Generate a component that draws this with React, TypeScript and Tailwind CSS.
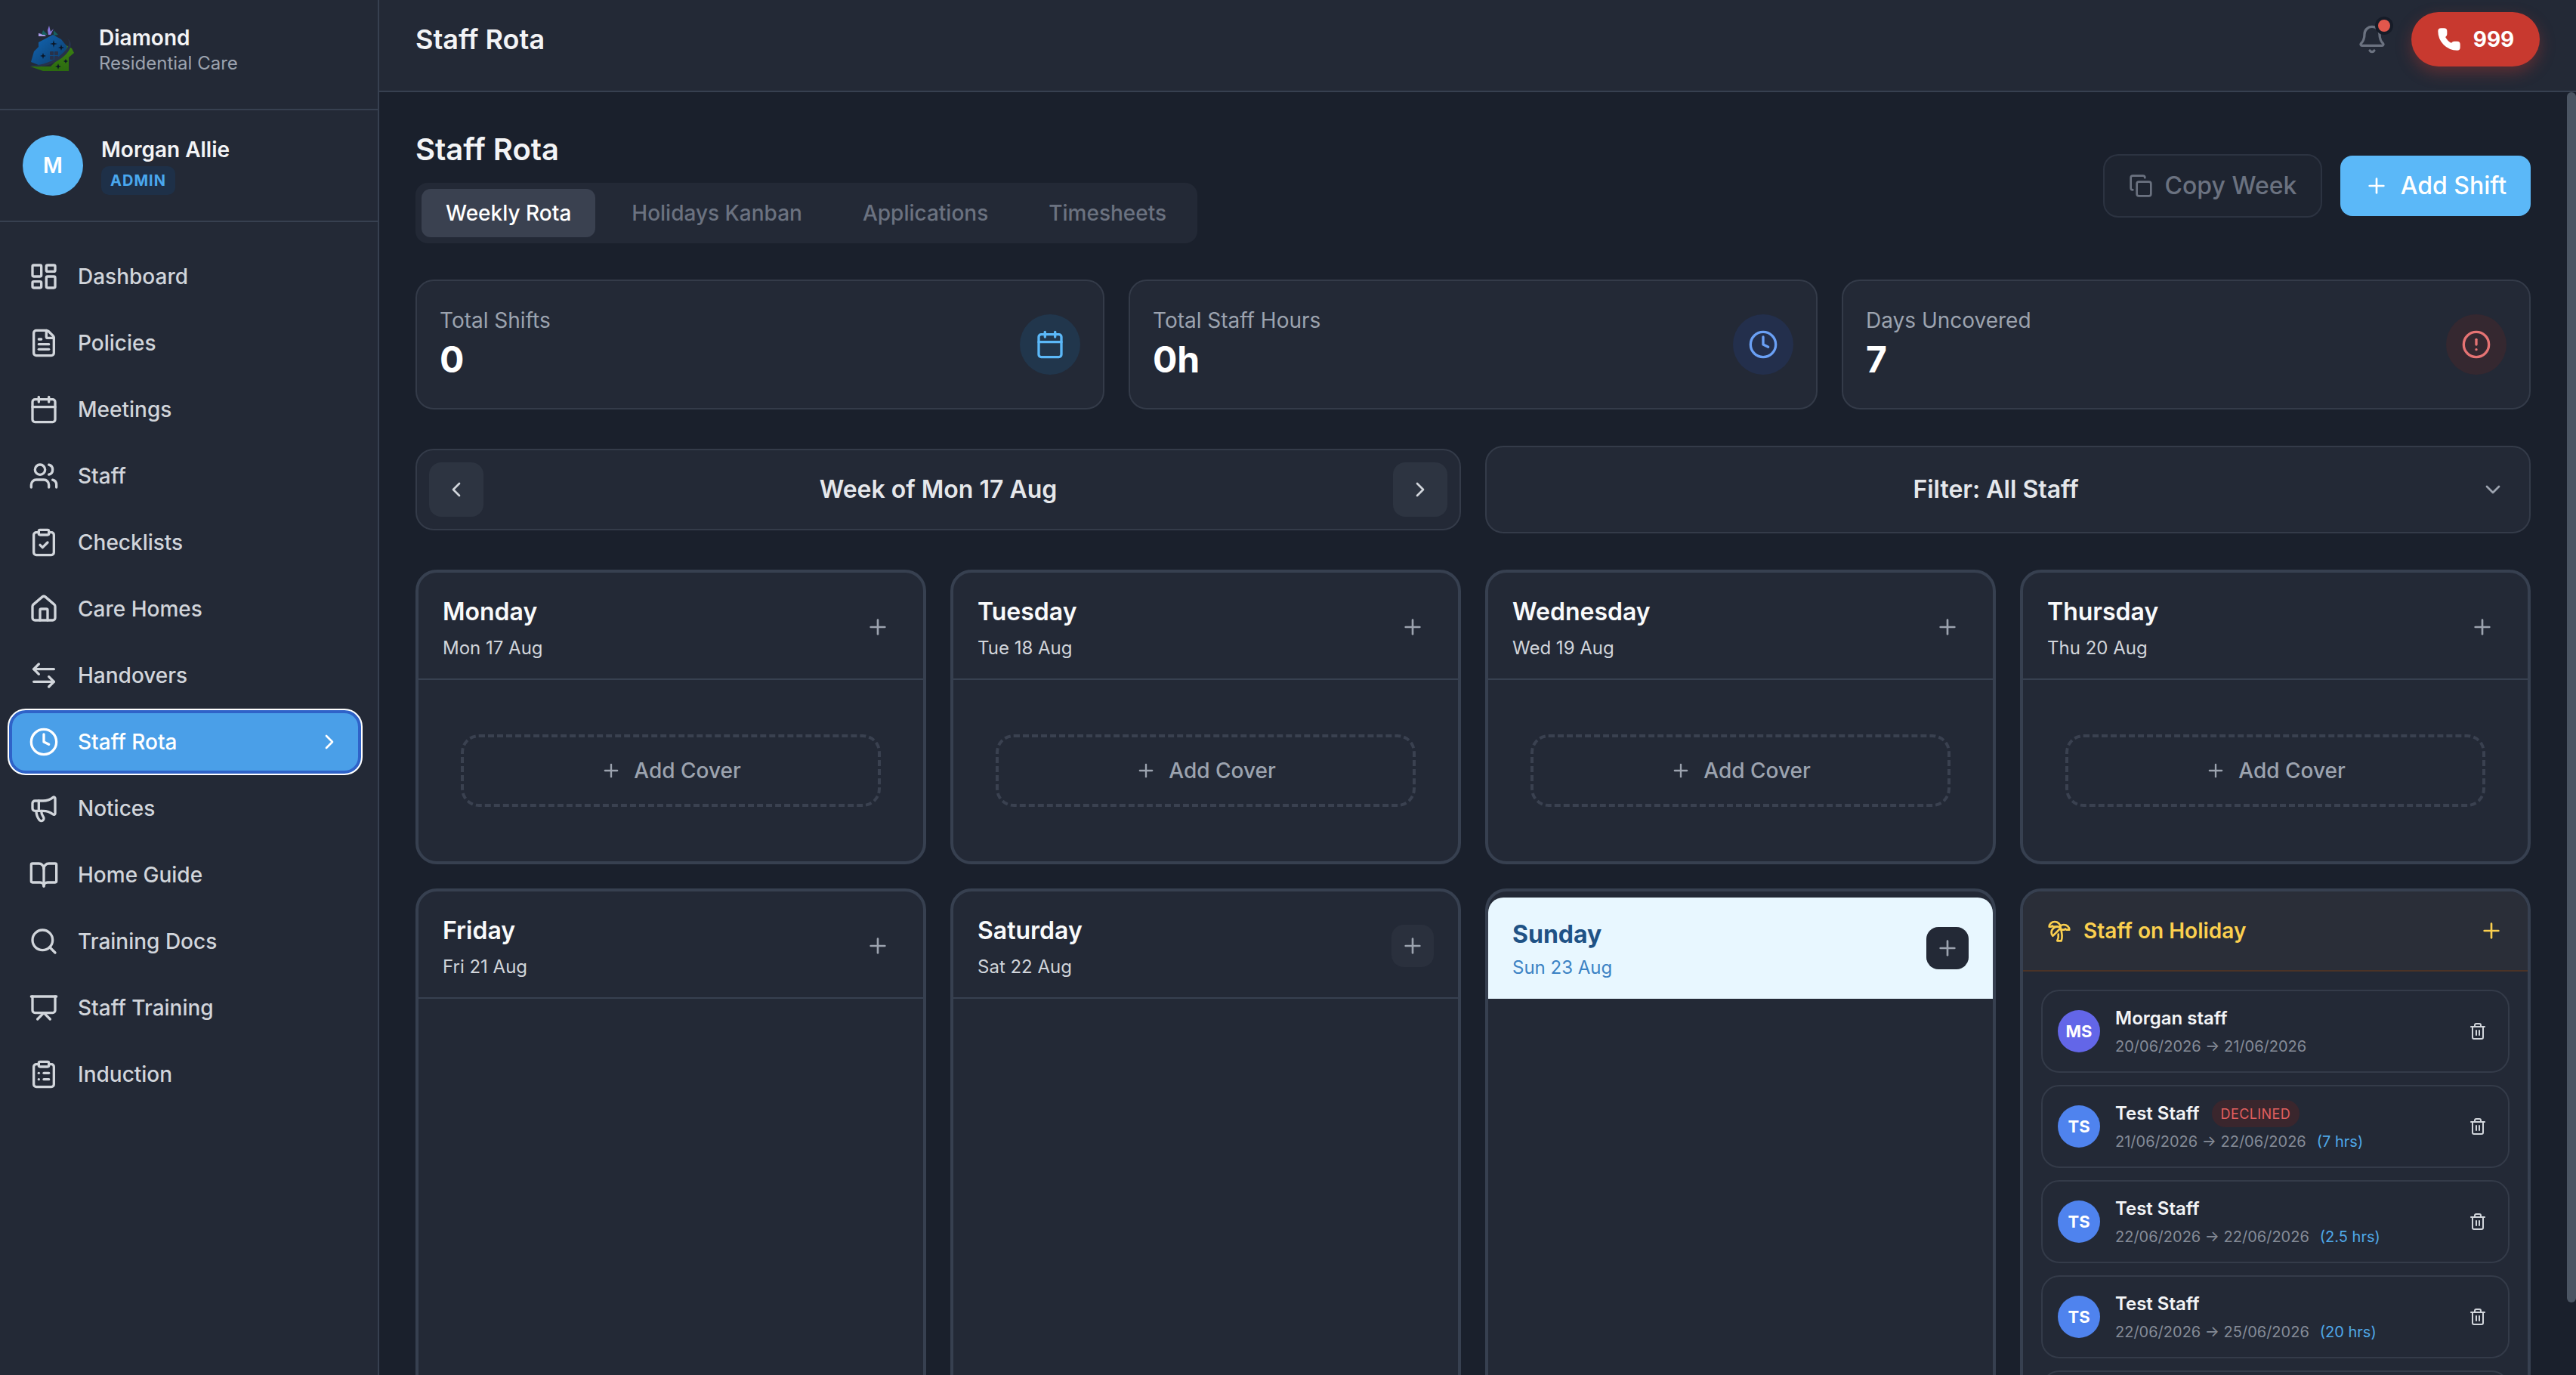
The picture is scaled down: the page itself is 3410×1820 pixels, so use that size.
import {
  AlertCircle,
  ArrowLeftRight,
  BookOpen,
  Calendar,
  ChevronDown,
  ChevronLeft,
  ChevronRight,
  ClipboardCheck,
  ClipboardList,
  Clock,
  Copy,
  FileText,
  Bell,
  House,
  LayoutDashboard,
  Megaphone,
  Phone,
  Plus,
  Presentation,
  Search,
  Trash2,
  TreePalm,
  Users,
} from "lucide-react";

const navItems = [
  { label: "Dashboard", icon: LayoutDashboard },
  { label: "Policies", icon: FileText },
  { label: "Meetings", icon: Calendar },
  { label: "Staff", icon: Users },
  { label: "Checklists", icon: ClipboardCheck },
  { label: "Care Homes", icon: House },
  { label: "Handovers", icon: ArrowLeftRight },
  { label: "Staff Rota", icon: Clock, active: true },
  { label: "Notices", icon: Megaphone },
  { label: "Home Guide", icon: BookOpen },
  { label: "Training Docs", icon: Search },
  { label: "Staff Training", icon: Presentation },
  { label: "Induction", icon: ClipboardList },
];

const holidays = [
  { initials: "MS", name: "Morgan staff", dates: "20/06/2026 → 21/06/2026", violet: true },
  { initials: "TS", name: "Test Staff", dates: "21/06/2026 → 22/06/2026", hours: "(7 hrs)", declined: true },
  { initials: "TS", name: "Test Staff", dates: "22/06/2026 → 22/06/2026", hours: "(2.5 hrs)" },
  { initials: "TS", name: "Test Staff", dates: "22/06/2026 → 25/06/2026", hours: "(20 hrs)" },
  { initials: "TS", name: "Test Staff", dates: "26/06/2026 → 27/06/2026", hours: "(8 hrs)" },
];

function Logo() {
  return (
    <svg width="66" height="64" viewBox="0 0 66 64" className="shrink-0">
      <defs>
        <linearGradient id="house" x1="0" y1="0" x2="1" y2="1">
          <stop offset="0" stopColor="#1268b8" />
          <stop offset="1" stopColor="#0d3a66" />
        </linearGradient>
        <linearGradient id="base" x1="0" y1="0" x2="0" y2="1">
          <stop offset="0" stopColor="#3f8a12" />
          <stop offset="1" stopColor="#2c6a10" />
        </linearGradient>
      </defs>
      <path d="M32 18 L58 32 L61 38 L54 44 L54 62 L20 62 L3 56 L30 56 L50 36 Z" fill="url(#base)" />
      <path d="M33 14 L44 20 L52 30 L46 42 L26 54 L14 54 L4 50 L8 36 L14 30 L14 24 Z" fill="url(#house)" />
      <path d="M3 54 C14 60 34 54 48 42 C58 33 60 24 52 19 C58 25 52 34 42 42 C30 51 14 56 3 54 Z" fill="#27324a" />
      <rect x="29" y="36" width="5" height="5" rx="1" fill="#27324a" />
      <rect x="35" y="36" width="5" height="5" rx="1" fill="#27324a" />
      <rect x="29" y="42" width="5" height="5" rx="1" fill="#27324a" />
      <rect x="35" y="42" width="5" height="5" rx="1" fill="#27324a" />
      <path d="M34 21 l1 4 4 1 -4 1 -1 4 -1 -4 -4 -1 4 -1 z" fill="#0b1626" />
      <path d="M44 27 l1 3 3 1 -3 1 -1 3 -1 -3 -3 -1 3 -1 z" fill="#0b1626" />
      <path d="M20 38 l1 3 3 1 -3 1 -1 3 -1 -3 -3 -1 3 -1 z" fill="#0b1626" />
      <path d="M40 52 l1 3 3 1 -3 1 -1 3 -1 -3 -3 -1 3 -1 z" fill="#0b1626" />
      <path d="M50 46 l1 2 2 1 -2 1 -1 2 -1 -2 -2 -1 2 -1 z" fill="#0b1626" />
      <path d="M28 2 L30 10 L34 6 L30 14 L27 14 L26 8 Z" fill="#8878dc" />
      <path d="M14 12 L22 14 L24 16 L14 16 Z" fill="#a89be8" />
      <path d="M20 8 L26 14 L18 14 Z M34 8 L40 14 L34 15 Z" fill="#17605f" />
    </svg>
  );
}

function Sidebar() {
  return (
    <aside className="flex h-full w-[502px] shrink-0 flex-col border-r-2 border-[#374050] bg-[#232936]">
      <div className="flex h-[146px] items-start gap-[28px] border-b-2 border-[#374050] pl-[37px] pt-[32px]">
        <Logo />
        <div className="pt-[-2px]">
          <div className="text-[28px] leading-[36px] font-semibold text-[#f3f4f6]">Diamond</div>
          <div className="text-[24px] leading-[32px] text-[#9ca3af]">Residential Care</div>
        </div>
      </div>
      <div className="flex h-[148px] items-center gap-[24px] border-b-2 border-[#374050] pl-[30px]">
        <div className="flex h-[80px] w-[80px] items-center justify-center rounded-full bg-[#5bb8f8] text-[28px] font-semibold text-white">
          M
        </div>
        <div>
          <div className="text-[28px] leading-[36px] font-semibold text-[#f3f4f6]">Morgan Allie</div>
          <div className="mt-[4px] flex h-[38px] w-[98px] items-center justify-center rounded-[10px] bg-[#1e3048] text-[20px] font-bold tracking-[1px] text-[#4aa8ee]">
            ADMIN
          </div>
        </div>
      </div>
      <nav className="flex flex-col pt-[28px]">
        {navItems.map((item) => {
          const Icon = item.icon;
          if (item.active) {
            return (
              <div
                key={item.label}
                className="ml-[10px] flex h-[88px] w-[470px] items-center gap-[25px] rounded-[24px] border-2 border-white bg-[#4a9fe8] pl-[26px] pr-[26px] text-white shadow-[inset_0_0_0_4px_#2f62c8]"
              >
                <Icon size={40} className="shrink-0" />
                <span className="flex-1 text-[28px] font-medium">{item.label}</span>
                <ChevronRight size={32} />
              </div>
            );
          }
          return (
            <div key={item.label} className="flex h-[88px] items-center gap-[25px] pl-[38px] text-[#d1d5db]">
              <Icon size={40} className="shrink-0" />
              <span className="text-[28px] font-medium">{item.label}</span>
            </div>
          );
        })}
      </nav>
    </aside>
  );
}

function TopBar() {
  return (
    <header className="flex h-[122px] shrink-0 items-center justify-between border-b-2 border-[#374050] bg-[#232936] pb-[16px] pl-[48px] pr-[48px]">
      <h1 className="text-[36px] font-semibold text-[#f3f4f6]">Staff Rota</h1>
      <div className="flex items-center gap-[32px]">
        <div className="relative h-[40px] w-[40px] text-[#6b7280]">
          <Bell size={40} />
          <span className="absolute -top-[10px] left-[24px] h-[24px] w-[24px] rounded-full border-4 border-[#161c28] bg-[#e2574c]" />
        </div>
        <button className="flex h-[72px] w-[170px] items-center justify-center gap-[16px] rounded-full bg-[#c8392f] text-[28px] font-bold text-white shadow-[0_8px_20px_rgba(200,57,47,0.35)]">
          <Phone size={32} fill="currentColor" />
          999
        </button>
      </div>
    </header>
  );
}

function StatCard({
  label,
  value,
  icon: Icon,
  iconClass,
}: {
  label: string;
  value: string;
  icon: typeof Clock;
  iconClass: string;
}) {
  return (
    <div className="flex items-center justify-between rounded-[24px] border-2 border-[#343b49] bg-[#232936] px-[30px] py-[32px]">
      <div>
        <div className="text-[28px] leading-[40px] text-[#9ca3af]">{label}</div>
        <div className="text-[48px] leading-[64px] font-bold text-white">{value}</div>
      </div>
      <div className={`flex h-[80px] w-[80px] items-center justify-center rounded-full ${iconClass}`}>
        <Icon size={40} />
      </div>
    </div>
  );
}

function DayHeader({ day, date, hovered }: { day: string; date: string; hovered?: boolean }) {
  return (
    <div className="flex items-center justify-between border-b-2 border-[#374050] pb-[24px] pl-[32px] pr-[32px] pt-[28px]">
      <div>
        <div className="text-[32px] leading-[48px] font-semibold text-[#f9fafb]">{day}</div>
        <div className="mt-[8px] text-[24px] leading-[32px] text-[#d1d5db]">{date}</div>
      </div>
      <button
        className={`flex h-[56px] w-[56px] items-center justify-center rounded-[16px] text-[#9ca3af] ${hovered ? "bg-[#2a303d]" : ""}`}
      >
        <Plus size={32} />
      </button>
    </div>
  );
}

function AddCover() {
  return (
    <div className="px-[56px] py-[72px]">
      <div className="flex h-[96px] items-center justify-center gap-[16px] rounded-[24px] border-4 border-dashed border-[#3a4150] text-[28px] font-medium text-[#9ca3af]">
        <Plus size={28} />
        Add Cover
      </div>
    </div>
  );
}

function HolidayRow({ item }: { item: (typeof holidays)[number] }) {
  return (
    <div className="flex items-center rounded-[24px] border-2 border-[#343b49] py-[16px] pl-[20px] pr-[28px]">
      <div
        className={`flex h-[56px] w-[56px] shrink-0 items-center justify-center rounded-full text-[22px] font-bold text-white ${item.violet ? "bg-[#6366e8]" : "bg-[#4f83ee]"}`}
      >
        {item.initials}
      </div>
      <div className="ml-[20px] flex-1">
        <div className="flex items-center gap-[16px]">
          <span className="text-[24px] leading-[40px] font-semibold text-[#f3f4f6]">{item.name}</span>
          {item.declined && (
            <span className="flex h-[36px] items-center rounded-full bg-[#3a262d] px-[12px] text-[18px] tracking-[0.4px] text-[#e05f5f]">
              DECLINED
            </span>
          )}
        </div>
        <div className="flex gap-[14px] text-[20px] leading-[34px] text-[#858b97]">
          <span>{item.dates}</span>
          {item.hours && <span className="text-[#4fa8e8]">{item.hours}</span>}
        </div>
      </div>
      <Trash2 size={24} className="shrink-0 text-[#d1d5db]" />
    </div>
  );
}

function HolidayCard() {
  return (
    <div className="h-[900px] overflow-hidden rounded-[28px] border-4 border-[#374050] bg-[#232936]">
      <div className="flex h-[106px] items-center justify-between border-b-2 border-[#4b3327] bg-[#2a2e38] pl-[32px] pr-[32px] text-[#fbd04f]">
        <div className="flex items-center gap-[16px]">
          <TreePalm size={32} />
          <span className="text-[28px] font-semibold">Staff on Holiday</span>
        </div>
        <Plus size={32} />
      </div>
      <div className="flex flex-col gap-[16px] p-[24px]">
        {holidays.map((item, i) => (
          <HolidayRow key={i} item={item} />
        ))}
      </div>
    </div>
  );
}

export default function App() {
  return (
    <div className="flex h-screen w-screen overflow-hidden bg-[#1a202c] font-['Inter',sans-serif]">
      <Sidebar />
      <div className="flex min-w-0 flex-1 flex-col">
        <TopBar />
        <div className="flex min-h-0 flex-1">
          <main className="min-w-0 flex-1 overflow-hidden px-[48px] pt-[48px]">
            {/* Title row */}
            <div className="flex items-center justify-between">
              <div>
                <h2 className="text-[40px] leading-[56px] font-semibold text-[#f3f4f6]">Staff Rota</h2>
                <div className="mt-[16px] flex h-[80px] w-[1035px] items-center gap-[16px] rounded-[16px] bg-[#232936] p-[8px] text-[28px] font-medium text-[#6b7280]">
                  <div className="flex h-[64px] items-center rounded-[12px] bg-[#3a4150] px-[32px] text-white">Weekly Rota</div>
                  <div className="px-[32px]">Holidays Kanban</div>
                  <div className="px-[32px]">Applications</div>
                  <div className="px-[32px]">Timesheets</div>
                </div>
              </div>
              <div className="flex items-center gap-[24px]">
                <button className="flex h-[84px] w-[290px] items-center justify-center gap-[16px] rounded-[20px] border-2 border-[#2c3341] bg-[#1e2430] text-[32px] font-medium text-[#6b7280]">
                  <Copy size={32} />
                  Copy Week
                </button>
                <button className="flex h-[80px] w-[252px] items-center justify-center gap-[16px] rounded-[16px] bg-[#5bb8f8] text-[32px] font-medium text-white">
                  <Plus size={32} />
                  Add Shift
                </button>
              </div>
            </div>

            {/* Stats */}
            <div className="mt-[48px] grid grid-cols-3 gap-[32px]">
              <StatCard label="Total Shifts" value="0" icon={Calendar} iconClass="bg-[#21364c] text-[#5bb8f8]" />
              <StatCard label="Total Staff Hours" value="0h" icon={Clock} iconClass="bg-[#232f4c] text-[#6aa0f5]" />
              <StatCard label="Days Uncovered" value="7" icon={AlertCircle} iconClass="bg-[#352830] text-[#e57373]" />
            </div>

            {/* Week nav and filter */}
            <div className="mt-[48px] grid grid-cols-2 items-center gap-[32px]">
              <div className="flex h-[108px] items-center justify-between rounded-[24px] border-2 border-[#343b49] bg-[#232936] px-[16px]">
                <button className="flex h-[72px] w-[72px] items-center justify-center rounded-[16px] bg-[#2d3441] text-[#d1d5db]">
                  <ChevronLeft size={32} />
                </button>
                <span className="text-[32px] font-semibold text-[#e5e7eb]">Week of Mon 17 Aug</span>
                <button className="flex h-[72px] w-[72px] items-center justify-center rounded-[16px] bg-[#2d3441] text-[#d1d5db]">
                  <ChevronRight size={32} />
                </button>
              </div>
              <div className="flex h-[116px] items-center rounded-[24px] border-2 border-[#343b49] bg-[#232936] pl-[32px] pr-[32px]">
                <span className="flex-1 text-center text-[32px] font-semibold text-[#e5e7eb]">Filter: All Staff</span>
                <ChevronDown size={32} className="text-[#9ca3af]" />
              </div>
            </div>

            {/* Days */}
            <div className="mt-[48px] grid grid-cols-4 gap-[32px]">
              {[
                ["Monday", "Mon 17 Aug"],
                ["Tuesday", "Tue 18 Aug"],
                ["Wednesday", "Wed 19 Aug"],
                ["Thursday", "Thu 20 Aug"],
              ].map(([day, date]) => (
                <div key={day} className="overflow-hidden rounded-[28px] border-4 border-[#374050] bg-[#232936]">
                  <DayHeader day={day} date={date} />
                  <AddCover />
                </div>
              ))}
              <div className="h-[900px] overflow-hidden rounded-[28px] border-4 border-[#374050] bg-[#232936]">
                <DayHeader day="Friday" date="Fri 21 Aug" />
              </div>
              <div className="h-[900px] overflow-hidden rounded-[28px] border-4 border-[#374050] bg-[#232936]">
                <DayHeader day="Saturday" date="Sat 22 Aug" hovered />
              </div>
              <div className="h-[900px] overflow-hidden rounded-[28px] border-4 border-[#374050] bg-[#232936] pt-[8px]">
                <div className="flex h-[134px] items-center justify-between rounded-t-[20px] bg-[#e8f7ff] pl-[32px] pr-[32px]">
                  <div>
                    <div className="text-[32px] leading-[48px] font-bold text-[#1f5285]">Sunday</div>
                    <div className="mt-[4px] text-[24px] leading-[32px] text-[#3b82c4]">Sun 23 Aug</div>
                  </div>
                  <button className="flex h-[56px] w-[56px] items-center justify-center rounded-[16px] bg-[#232936] text-[#9ca3af]">
                    <Plus size={32} />
                  </button>
                </div>
              </div>
              <HolidayCard />
            </div>
          </main>
          <div className="w-[12px] shrink-0">
            <div className="h-[1602px] rounded-full bg-[#4b5563]" />
          </div>
        </div>
      </div>
    </div>
  );
}
